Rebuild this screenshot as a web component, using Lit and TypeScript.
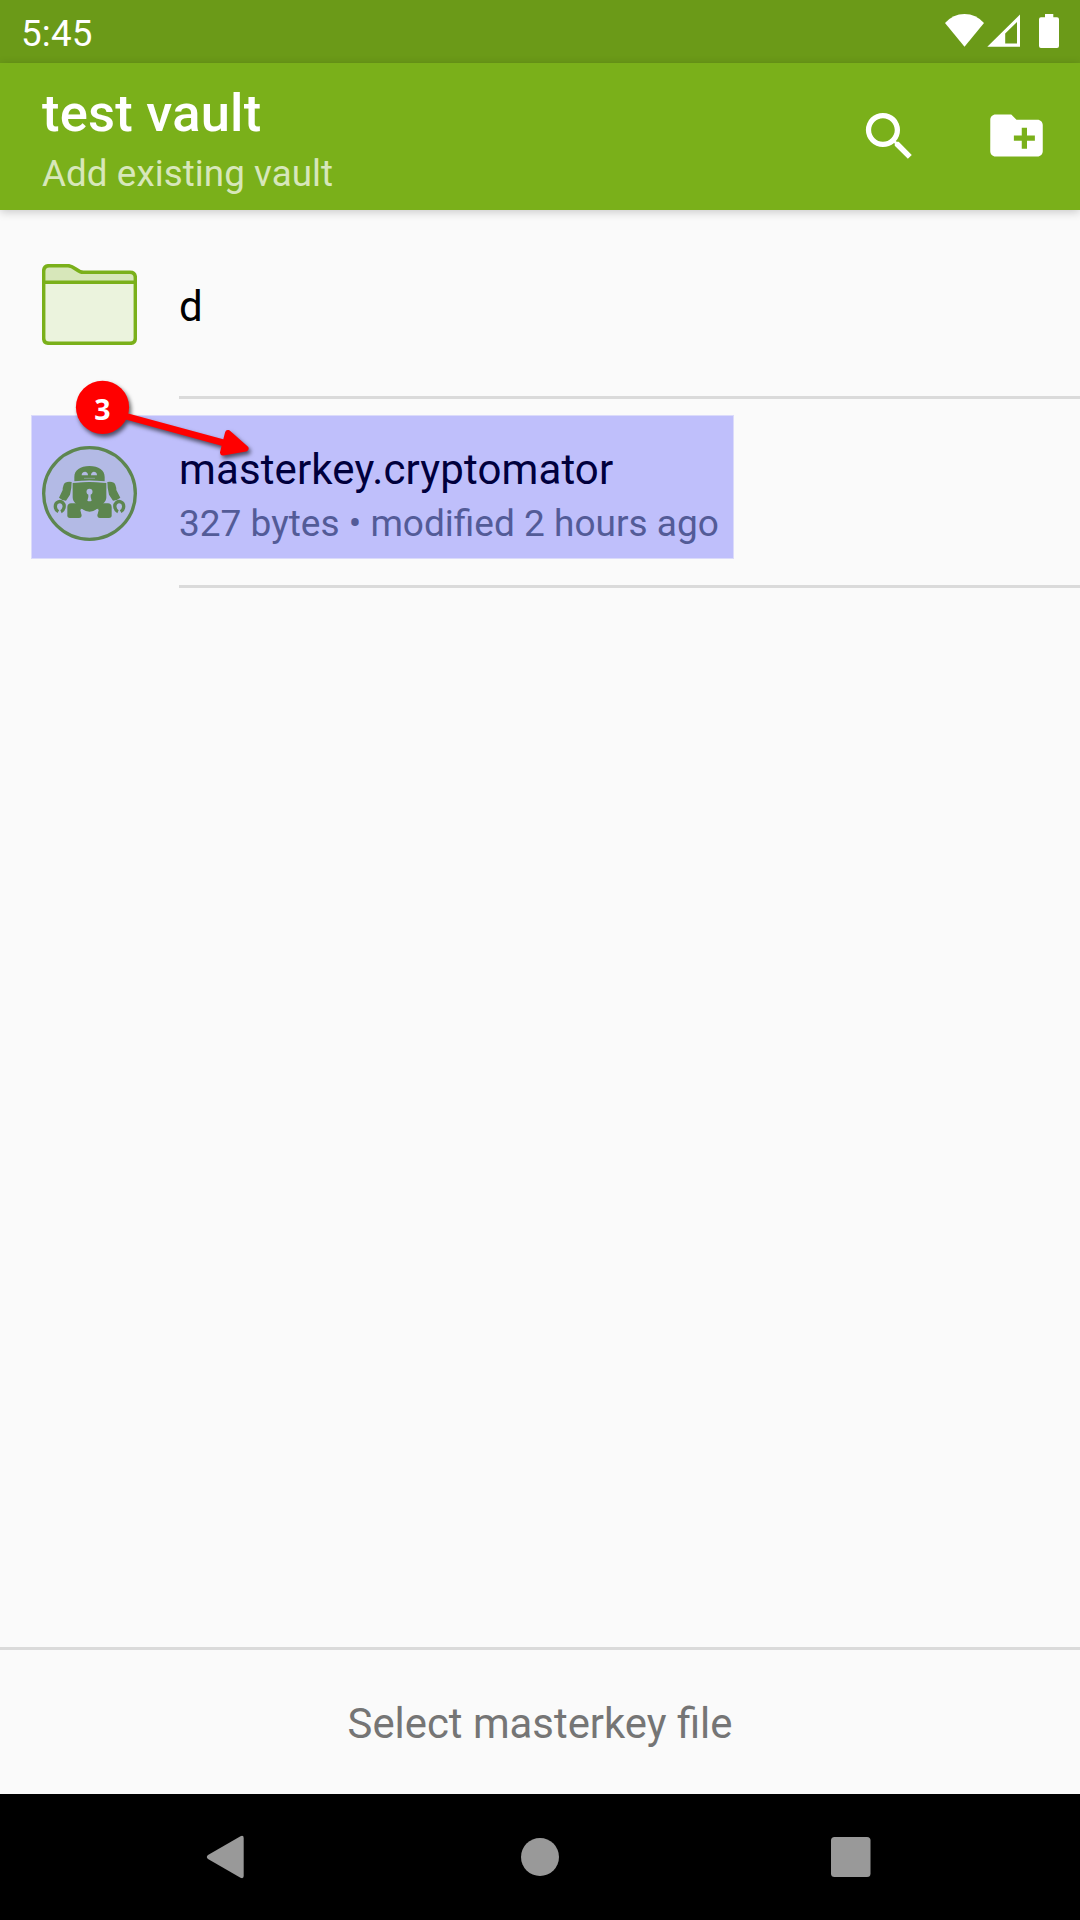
import { LitElement, html, css } from "lit";
import { customElement } from "lit/decorators.js";

const folderIcon = html`<svg class="icon" width="95" height="81" viewBox="0 0 285 243">
  <path d="M5 55V22Q5 5 22 5H78C98 5 104 25 124 25H264Q280 25 280 40V55Z" fill="#d7e7ba"/>
  <path d="M5 55H280V222Q280 238 264 238H22Q5 238 5 222Z" fill="#ebf3dd"/>
  <path d="M5 55H280M22 5H78C98 5 104 25 124 25H264Q280 25 280 41V222Q280 238 264 238H22Q5 238 5 222V22Q5 5 22 5Z"
    fill="none" stroke="#7ab01a" stroke-width="10.500"/>
</svg>`;

const robotIcon = html`<svg class="icon" width="95" height="95" viewBox="6 33 285 285">
  <circle cx="148.500" cy="175.500" r="137.500" fill="#ebf3dd" stroke="#7ab01a" stroke-width="10"/>
  <g fill="#7ab01a">
    <path d="M103 139V126C103 105 121 93 148.500 93S194 105 194 126V139Q148 134 103 139Z"/>
    <path d="M98 144Q148 138 199 144V187C199 195 195 202 188 207L171 222Q149 238 126 222L109 207C102 202 98 195 98 187Z"/>
    <path d="M95 141Q76 138 71 149Q67 160 68 165L57 188Q66 197 78 197L90 179Q95 160 95 141Z"/>
    <path d="M202 141Q221 138 226 149Q230 160 229 165L241 188Q231 197 219 197L207 179Q202 160 202 141Z"/>
    <path d="M93 205H112L129 216L121 226L125 240Q125 249 117 249H90Q81 249 82 240V216Q83 205 93 205Z"/>
    <path d="M204 205H185L168 216L176 226L172 240Q172 249 180 249H207Q216 249 215 240V216Q214 205 204 205Z"/>
  </g>
  <path d="M55 230C43 223 43 206 54 201C65 196 75 206 72 218Q70 227 63 230" fill="none" stroke="#7ab01a" stroke-width="10"/>
  <path d="M242 230C254 223 254 206 243 201C232 196 222 206 225 218Q227 227 234 230" fill="none" stroke="#7ab01a" stroke-width="10"/>
  <g fill="#ebf3dd">
    <path d="M125 121Q125 110 136 110Q144 112 144 121ZM153 121Q153 112 161 110Q171 110 171 121Z"/>
    <circle cx="148.500" cy="170" r="9"/>
    <path d="M145 174H152V186L155 197Q148 201 142 197L145 186Z"/>
    <path d="M122 221L131 226L126 240ZM175 221L166 226L171 240Z"/>
  </g>
  <path d="M132 130H165M103 142Q148 135 194 142" fill="none" stroke="#ebf3dd" stroke-width="2" opacity=".7"/>
</svg>`;

const statusIcons = html`<svg class="status-icons" width="120" height="36" viewBox="942 13 120 36" fill="#fff">
  <path d="M945 23Q953 14 964.500 14T984 23L964.500 46.700Z"/>
  <path fill-rule="evenodd" d="M1020 14.500V46.800H987.300ZM1017 22L1005.200 33.600V43.400H1017Z"/>
  <path d="M1045 14h8.300v3.300h3.700q2 0 2 2V46q0 2-2 2h-16q-2 0-2-2V19.300q0-2 2-2h4Z"/>
</svg>`;

@customElement("file-row")
class FileRow extends LitElement {
  static properties = { name: {}, detail: {}, kind: {} };
  declare name: string;
  declare detail: string;
  declare kind: string;

  static styles = css`
    :host { display: block; }
    .row { display: flex; height: 189px; box-sizing: border-box; padding-left: 42px; gap: 42px; }
    .lead { width: 95px; display: flex; align-items: center; }
    .icon { display: block; }
    .body {
      flex: 1; display: flex; flex-direction: column; justify-content: center; gap: 7px;
      border-bottom: 3px solid #dadada; padding-top: 6px;
    }
    .body.single { padding-top: 8px; }
    .name { font-size: 42px; line-height: 50px; letter-spacing: .12px; color: #000; }
    .detail { font-size: 37.02px; line-height: 44px; color: #6d7878; }
  `;

  render() {
    return html`<div class="row">
      <div class="lead">${this.kind === "folder" ? folderIcon : robotIcon}</div>
      <div class="body ${this.detail ? "" : "single"}">
        <div class="name">${this.name}</div>
        ${this.detail ? html`<div class="detail">${this.detail}</div>` : ""}
      </div>
    </div>`;
  }
}

@customElement("app-root")
class AppRoot extends LitElement {
  static styles = css`
    :host { display: block; font-family: Roboto, "Liberation Sans", sans-serif; }
    .screen {
      position: relative; width: 1080px; height: 1920px; overflow: hidden;
      display: flex; flex-direction: column; background: #fafafa;
    }
    .status {
      height: 63px; box-sizing: border-box; background: #6b9a18; color: #fff;
      display: flex; justify-content: space-between; padding: 13px 18px 0 21px;
    }
    .time { font-size: 36.75px; line-height: 42px; letter-spacing: .2px; }
    .bar {
      height: 147px; box-sizing: border-box; background: #7ab01a; color: #fff; flex: none;
      display: flex; justify-content: space-between; padding: 20px 32px 0 42px;
      box-shadow: 0 2px 9px rgba(0, 0, 0, .2);
    }
    .titles { display: flex; flex-direction: column; gap: 9px; }
    .title { font-size: 52.5px; line-height: 60px; letter-spacing: .22px; font-weight: 500; }
    .subtitle { font-size: 36.75px; line-height: 44px; letter-spacing: .07px; color: #d7e7ba; }
    .actions { display: flex; gap: 64.5px; padding-top: 21px; }
    .search { margin-top: 1px; }
    .list { flex: 1; }
    .footer {
      height: 147px; box-sizing: border-box; border-top: 3px solid #dadada; padding-top: 3px;
      display: flex; align-items: center; justify-content: center;
      font-size: 41.85px; line-height: 50px; color: #757575;
    }
    .nav { height: 126px; background: #000; }
    .nav svg { display: block; }
    .highlight {
      position: absolute; left: 31px; top: 415px; width: 703px; height: 144px; box-sizing: border-box;
      background: rgba(0, 0, 255, .235); background-clip: padding-box;
      border: 1px solid rgba(0, 0, 255, .12);
    }
    .callout { position: absolute; left: 60px; top: 370px; }
    .arrow { filter: drop-shadow(2px 3px 2px rgba(0, 0, 0, .6)); }
    .number { font: 700 28.5px "Open Sans", sans-serif; }
  `;

  render() {
    return html`<div class="screen">
      <div class="status"><span class="time">5:45</span>${statusIcons}</div>
      <div class="bar">
        <div class="titles">
          <div class="title">test vault</div>
          <div class="subtitle">Add existing vault</div>
        </div>
        <div class="actions">
          <svg class="search" width="63" height="63" viewBox="0 0 24 24" fill="#fff"><path d="M15.500 14h-.79l-.28-.27A6.471 6.471 0 0 0 16 9.500 6.500 6.500 0 1 0 9.500 16c1.610 0 3.090-.59 4.230-1.570l.27.28v.79l5 4.990L20.490 19l-4.990-5zm-6 0C7.010 14 5 11.990 5 9.500S7.010 5 9.500 5 14 7.010 14 9.500 11.990 14 9.500 14z"/></svg>
          <svg width="63" height="63" viewBox="0 0 24 24" fill="#fff"><path d="M20 6h-8l-2-2H4c-1.110 0-1.990.89-1.990 2L2 18c0 1.110.89 2 2 2h16c1.110 0 2-.89 2-2V8c0-1.110-.89-2-2-2zm-1 8h-3v3h-2v-3h-3v-2h3V9h2v3h3v2z"/></svg>
        </div>
      </div>
      <div class="list">
        <file-row name="d" kind="folder"></file-row>
        <file-row name="masterkey.cryptomator" detail="327 bytes • modified 2 hours ago" kind="vault"></file-row>
      </div>
      <div class="footer">Select masterkey file</div>
      <div class="nav">
        <svg width="1080" height="126" viewBox="0 1794 1080 126" fill="#999">
          <path d="M208 1855L240.500 1836.200Q243.700 1835 243.700 1838V1876Q243.700 1879 240.500 1877.800L208 1859Q205.600 1857 208 1855Z"/>
          <circle cx="540" cy="1857" r="19"/>
          <rect x="831" y="1837" width="39.500" height="40" rx="3.500"/>
        </svg>
      </div>
      <div class="highlight"></div>
      <svg class="callout" width="200" height="100" viewBox="60 370 200 100">
        <g class="arrow" fill="#f00" stroke="#f00" stroke-linejoin="round">
          <circle cx="102.500" cy="407.300" r="26.600" stroke="none"/>
          <path d="M120 414.600L226 443.500" stroke-width="6.500"/>
          <path d="M228 433L245.500 448.500L223 452.500Z" stroke-width="6"/>
        </g>
        <text class="number" x="102.500" y="420" text-anchor="middle" fill="#fff">3</text>
      </svg>
    </div>`;
  }
}
